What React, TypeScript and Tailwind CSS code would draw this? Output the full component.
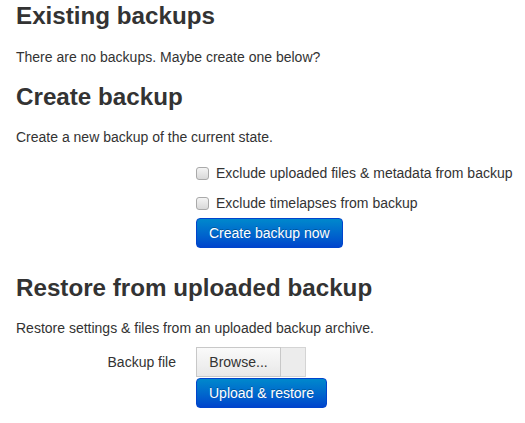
import React from 'react';

const Checkbox: React.FC<{ label: string }> = ({ label }) => (
  <label className="flex h-5 items-center whitespace-nowrap">
    <span className="mr-[7px] h-[13px] w-[13px] shrink-0 rounded-[3px] border border-[#a9a9a9] bg-gradient-to-b from-[#f4f4f4] to-[#d8d8d8]" />
    <span>{label}</span>
  </label>
);

const PrimaryButton: React.FC<{ children: React.ReactNode }> = ({ children }) => (
  <button
    type="button"
    className="h-[30px] rounded-[4px] border border-[#0044cc] bg-gradient-to-b from-[#0088cc] to-[#0044cc] px-3 text-[14px] leading-5 text-white [text-shadow:0_-1px_0_rgba(0,0,0,0.25)]"
  >
    {children}
  </button>
);

export default function App() {
  return (
    <div className="bg-white px-4 text-[14px] leading-5 text-[#333] font-['Liberation_Sans',Arial,sans-serif]">
      <h2 className="text-[24.2px] font-bold leading-8">Existing backups</h2>
      <p className="mt-[15px]">There are no backups. Maybe create one below?</p>

      <h2 className="mt-[14px] text-[24.2px] font-bold leading-8">Create backup</h2>
      <p className="mt-[14px]">Create a new backup of the current state.</p>
      <div className="ml-[180px] mt-[16px] flex flex-col">
        <Checkbox label="Exclude uploaded files & metadata from backup" />
        <div className="mt-[10px]">
          <Checkbox label="Exclude timelapses from backup" />
        </div>
        <div className="mt-[5px]">
          <PrimaryButton>Create backup now</PrimaryButton>
        </div>
      </div>

      <h2 className="mt-[24px] text-[24.2px] font-bold leading-8">Restore from uploaded backup</h2>
      <p className="mt-[14px]">Restore settings &amp; files from an uploaded backup archive.</p>
      <div className="mt-[9px] flex">
        <label className="w-[160px] pt-[5px] text-right">Backup file</label>
        <div className="ml-5 flex flex-col">
          <div className="flex h-[30px]">
            <div className="flex w-[85px] items-center justify-center border border-[#c8c8c8] bg-gradient-to-b from-[#fafafa] to-[#e8e8e8] text-[#333]">
              Browse...
            </div>
            <div className="w-[25px] border border-l-0 border-[#d4d4d4] bg-[#ececec]" />
          </div>
          <div className="mt-px">
            <PrimaryButton>Upload &amp; restore</PrimaryButton>
          </div>
        </div>
      </div>
    </div>
  );
}
